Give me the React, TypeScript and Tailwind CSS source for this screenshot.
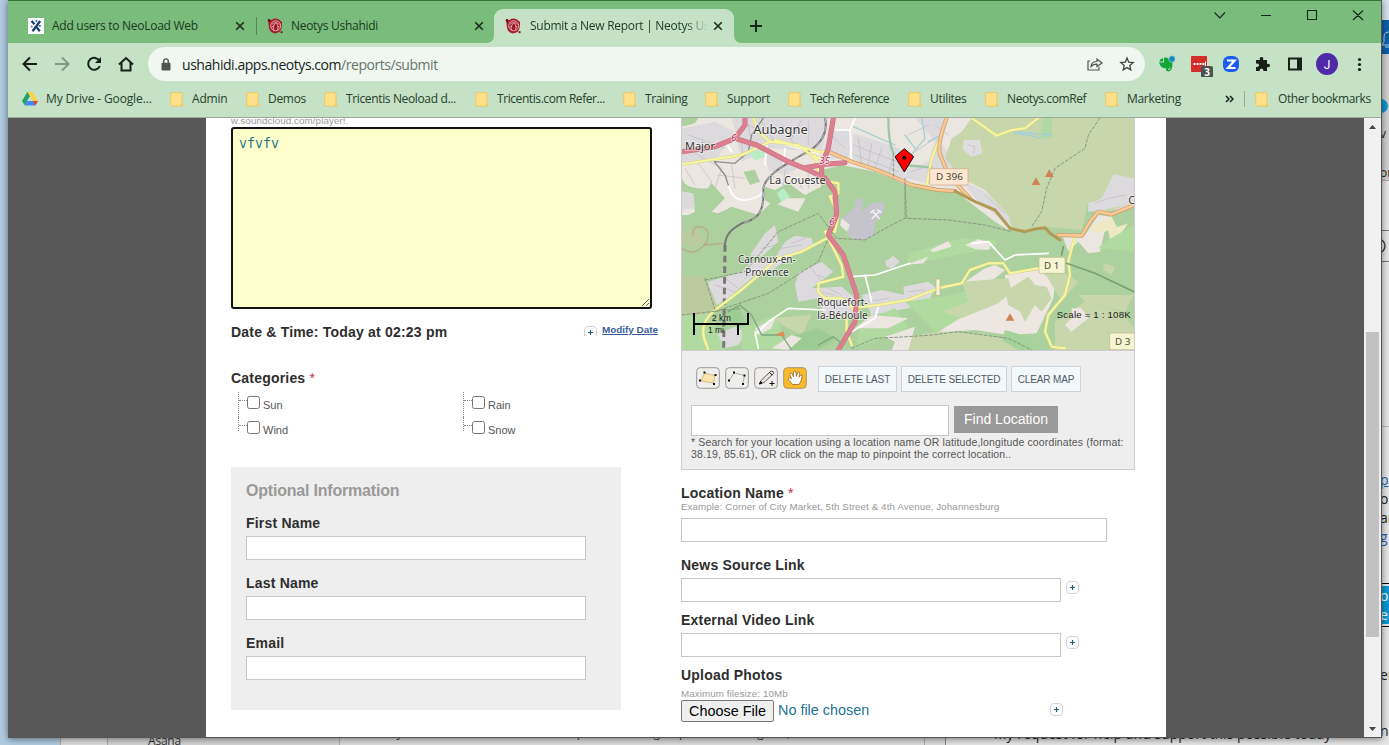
import React from "react";

const UI = "font-['Open_Sans','Noto_Sans',sans-serif]";

function Globe() {
  return (
    <svg width="17" height="17" viewBox="0 0 17 17" className="shrink-0" fill="none">
      <path d="M1 1.5 4.5 2Q8-.5 12 1.5L15 4 15 7Q15 11 12.5 14L8 15.5Q3 14.5 2 10L1.5 6Z" fill="#a51d2b" />
      <circle cx="8.7" cy="7.8" r="5" stroke="#f0c9c7" strokeWidth=".8" />
      <path d="M5 6.2Q9 3 12.500 6.500M4.600 9Q8 6 12.600 9M6.500 12Q5.500 7 9.200 4.400M10.600 12.300Q12 8 9.400 5.200" stroke="#f0c9c7" strokeWidth=".7" />
      <circle cx="8.800" cy="8" r="1.500" fill="#8c1420" />
      <circle cx="14.600" cy="14.200" r="1.100" fill="#8c1420" />
      <circle cx="2" cy="2.400" r="1.300" fill="#6f1019" />
    </svg>
  );
}

function Close() {
  return (
    <svg width="10" height="10" viewBox="0 0 10 10" className="shrink-0">
      <path d="M1.2 1.2 8.8 8.8M8.8 1.2 1.2 8.8" stroke="#1c2b1d" strokeWidth="1.6" />
    </svg>
  );
}

function Folder() {
  return (
    <svg width="14" height="15" viewBox="0 0 14 15" className="shrink-0">
      <path d="M1.5.7H11Q12 .7 12 1.7V12L13 14H1.5Q.8 14 .8 13V1.5Q.8.7 1.5.7Z" fill="#ffe08a" stroke="#efc456" strokeWidth=".9" />
      <path d="M11.5 9.5 13 13.5 10.3 14Z" fill="#f3c95d" />
    </svg>
  );
}

function Plus() {
  return (
    <svg width="13" height="13" viewBox="0 0 13 13" className="shrink-0">
      <rect x=".5" y=".5" width="12" height="12" rx="3.5" fill="#fff" stroke="#d2d2d8" />
      <path d="M6.5 4V9M4 6.5H9" stroke="#1c5b78" strokeWidth="1.2" />
    </svg>
  );
}

const bookmarks = [
  { label: "Admin", cls: "w-[76px]", text: "tracking-[-0.2px]" },
  { label: "Demos", cls: "w-[78px]", text: "tracking-[-0.3px]" },
  { label: "Tricentis Neoload d...", cls: "w-[151px]", text: "tracking-[-0.36px]" },
  { label: "Tricentis.com Refer...", cls: "w-[148px]", text: "tracking-[-0.42px]" },
  { label: "Training", cls: "w-[82px]", text: "tracking-[-0.4px]" },
  { label: "Support", cls: "w-[83px]", text: "tracking-[-0.3px]" },
  { label: "Tech Reference", cls: "w-[120px]", text: "tracking-[-0.5px]" },
  { label: "Utilites", cls: "w-[77px]", text: "tracking-[-0.3px]" },
  { label: "Neotys.comRef", cls: "w-[120px]", text: "tracking-[-0.4px]" },
  { label: "Marketing", cls: "w-[90px]", text: "tracking-[-0.3px]" },
];

function TabStrip() {
  return (
    <div className={`flex h-[43px] shrink-0 border-t border-[#35713a] bg-[#79bc7c] text-[12px] text-[#1c3a20] ${UI}`}>
      <div className="mt-2 flex h-[34px] w-[248px] items-center pl-5 pr-[11px]">
        <svg width="16" height="16" viewBox="0 0 16 16" className="shrink-0">
          <rect width="16" height="16" fill="#fff" />
          <path d="M3.500 3 6.500 6.200M12.200 3 4.500 13.200M8.800 9.500 11.800 13.200" stroke="#173f78" strokeWidth="2.300" />
          <path d="M7.800 3.800 9 2.400M2.800 8.500H4.500M10.800 7.800H12.800" stroke="#2c66a8" strokeWidth="1.700" />
        </svg>
        <span className="ml-2 flex-1 whitespace-nowrap tracking-[-0.27px]">Add users to NeoLoad Web</span>
        <Close />
      </div>
      <div className="mt-4 h-[18px] w-px bg-[#4f8a54]" />
      <div className="mt-2 flex h-[34px] w-[229px] items-center pl-[10px] pr-[2px]">
        <Globe />
        <span className="ml-[7px] flex-1 whitespace-nowrap tracking-[-0.29px]">Neotys Ushahidi</span>
        <Close />
      </div>
      <div className="mt-2 flex">
        <svg width="8" height="34" viewBox="0 0 8 34"><path d="M8 26Q8 34 0 34H8Z" fill="#c5e1c6" /></svg>
        <div className="flex h-[34px] w-[240px] items-center rounded-t-[9px] bg-[#c5e1c6] pl-[11px] pr-[11px]">
          <Globe />
          <span className="ml-[8px] w-[178px] shrink-0 overflow-hidden whitespace-nowrap tracking-[-0.28px] [mask-image:linear-gradient(to_right,black_155px,transparent_178px)]">
            Submit a New Report | Neotys Ushahidi
          </span>
          <span className="ml-[5px] flex"><Close /></span>
        </div>
        <svg width="8" height="34" viewBox="0 0 8 34"><path d="M0 26Q0 34 8 34H0Z" fill="#c5e1c6" /></svg>
      </div>
      <svg width="14" height="14" viewBox="0 0 14 14" className="ml-[7px] mt-[18px]">
        <path d="M7 1V13M1 7H13" stroke="#14261a" strokeWidth="2" />
      </svg>
      <svg width="160" height="24" viewBox="0 0 160 24" className="ml-auto mr-[9px] mt-[2px]" fill="none" stroke="#14261a" strokeWidth="1.1">
        <path d="M2.5 9.5 7.8 15 13 9.5M49 12.5H59M95.5 7.5H104.5V16.5H95.5ZM141 7.5 151 17M151 7.5 141 17" />
      </svg>
    </div>
  );
}

function Toolbar() {
  return (
    <div className={`flex h-[75px] shrink-0 flex-col border-b border-[#9aab9b] bg-[#c5e1c6] ${UI}`}>
      <div className="flex h-[42px] items-center">
        <svg width="130" height="24" viewBox="8 52 130 24" className="ml-0 shrink-0" fill="none" stroke="#17211a" strokeWidth="2">
          <path d="M37 64H24M30 57.5 23.5 64 30 70.5" />
          <path d="M55 64H68M62 57.5 68.500 64 62 70.500" stroke="#7f9a83" />
          <path d="M99.500 61A6 6 0 1 0 99.800 66" />
          <path d="M101 57V63H95Z" fill="#17211a" stroke="none" />
          <path d="M119 64.500 126 58 133 64.500M121.500 63V70.500H130.500V63" />
        </svg>
        <div className="ml-[10px] flex h-[34px] w-[997px] items-center rounded-full bg-[#eff7f0] pl-[13px] pr-[10px]">
          <svg width="10" height="13" viewBox="0 0 10 13"><rect x=".5" y="4.700" width="9" height="7.800" rx="1" fill="#4d5650" /><path d="M2.700 5V3.200A2.300 2.300 0 0 1 7.300 3.200V5" stroke="#4d5650" strokeWidth="1.400" fill="none" /></svg>
          <span className="ml-[11px] whitespace-nowrap text-[14px] tracking-[-0.46px] text-[#1b241d]">
            ushahidi.apps.neotys.com<span className="text-[#68756b]">/reports/submit</span>
          </span>
          <svg width="16" height="16" viewBox="0 0 16 16" className="ml-auto" fill="none" stroke="#4d5650" strokeWidth="1.200">
            <path d="M3 5H1V14H12V11M4 10.500Q4.500 5.500 10 5.500V3L15 7 10 10.500V8.200Q6.500 8 4 10.500Z" />
          </svg>
          <svg width="16" height="16" viewBox="0 0 16 16" className="ml-4" fill="none" stroke="#3f4a42" strokeWidth="1.300">
            <path d="M8 2 9.700 6.100 14.200 6.500 10.800 9.500 11.800 13.900 8 11.600 4.200 13.900 5.200 9.500 1.800 6.500 6.300 6.100Z" />
          </svg>
        </div>
        <svg width="220" height="26" viewBox="1153 51 220 26" className="ml-2 shrink-0">
          <path d="M1163 58V61.500H1159.300Q1160 58.500 1163 58Z" fill="#12a537" />
          <path d="M1164 57.500Q1168 57 1169 59Q1172.500 59 1172.500 63Q1172.500 71 1168.500 71.500Q1165 71 1166 68Q1161 69 1159 62.500H1164Z" fill="#12a537" />
          <path d="M1168 69.500Q1170 70 1170 67.500" stroke="#c5e1c6" fill="none" />
          <circle cx="1172" cy="59" r="3.200" fill="#1188c4" stroke="#c5e1c6" strokeWidth=".6" />
          <rect x="1191" y="56" width="16" height="16" rx="1" fill="#d32d27" />
          <path d="M1193.500 64H1204.500" stroke="#fff" strokeWidth="2" strokeDasharray="2 1" />
          <path d="M1205.500 61.500V66" stroke="#fff" />
          <rect x="1201" y="66" width="12" height="12" rx="2" fill="#4c524e" />
          <text x="1207" y="76" textAnchor="middle" fontFamily="Open Sans" fontSize="10" fontWeight="700" fill="#fff">3</text>
          <rect x="1223" y="56" width="16" height="16" rx="6" fill="#1c5cf0" />
          <path d="M1227 60.500H1234.500L1228 68H1235.500" fill="none" stroke="#fff" strokeWidth="2.200" />
          <path d="M1256 60H1260Q1259 57 1261.500 57T1263 60H1267V64Q1270 63 1270 65.500T1267 67V71H1263.500Q1263.500 68.500 1261.500 68.500T1259.500 71H1256V67Q1259 67 1259 65T1256 63.500Z" fill="#17211a" />
          <path d="M1289 58.500H1301V69.500H1289Z" fill="none" stroke="#17211a" strokeWidth="2" />
          <path d="M1297 58H1302V70H1297Z" fill="#17211a" />
          <circle cx="1327" cy="64" r="11" fill="#4f2aa8" />
          <text x="1327" y="68.500" textAnchor="middle" fontFamily="Roboto" fontSize="12" fill="#fff">J</text>
          <g fill="#17211a"><circle cx="1359.500" cy="59.500" r="1.600" /><circle cx="1359.500" cy="64.500" r="1.600" /><circle cx="1359.500" cy="69.500" r="1.600" /></g>
        </svg>
      </div>
      <div className="flex h-7 items-center whitespace-nowrap pl-[14px] text-[12px] text-[#25402a]">
        <svg width="16" height="14" viewBox="0 0 16 14" className="shrink-0">
          <path d="M5.300 0H10.500L5.200 9 2.800 13.200 0 9Z" fill="#1fa463" />
          <path d="M5.300 0H10.500L16 9H11Z" fill="#ffcf48" />
          <path d="M5 9H16L13.300 13.500H2.600Z" fill="#4285f4" />
          <path d="M11 9H16L13.400 13.500Z" fill="#ea4335" />
          <path d="M8 4.500 5.300 9H10.700Z" fill="#c5e1c6" />
        </svg>
        <span className="ml-2 w-[124px] shrink-0 tracking-[-0.13px]">My Drive - Google...</span>
        {bookmarks.map((b) => (
          <div key={b.label} className={`flex shrink-0 items-center ${b.cls}`}>
            <Folder />
            <span className={`ml-[8px] ${b.text}`}>{b.label}</span>
          </div>
        ))}
        <svg width="9" height="8" viewBox="0 0 9 8" className="ml-[30px] shrink-0" fill="none" stroke="#17211a" strokeWidth="1.500"><path d="M1 1 4 4 1 7M5 1 8 4 5 7" /></svg>
        <div className="ml-[10px] h-4 w-px bg-[#8fae93]" />
        <div className="ml-[10px] flex items-center"><Folder /><span className="ml-[9px] tracking-[-0.38px]">Other bookmarks</span></div>
      </div>
    </div>
  );
}

const yellowRoads =
  "M21 148 200 120 285 80 370 90 420 130 450 130M300 75 430 110 465 110M285 80 250 50 235 9M435 190 420 120M460 200 490 205 490 235 465 245M465 365 380 410 310 430 205 520 120 585Q65 630 95 690L100 705M465 245 490 300 480 350 450 350 500 450 505 485 430 505V530L450 550H500L550 590M530 580 610 570 700 555 790 520 860 505 885 465 940 445 985 445 1005 475 1090 460 1150 470M890 9 965 62 1010 45 1050 40 1090 9M1200 365 1190 400 1180 440 1185 480 1170 540 1120 600 1110 650 1130 695 1170 700M755 210 770 130 790 80M515 600 515 650 530 690";
const orangeRoads =
  "M460 110 530 140 620 170 710 210 790 225 840 228M815 9Q780 100 800 130L820 180 885 250M1150 360 1220 362 1245 320 1270 290 1310 298 1377 270";
const motorways =
  "M21 110 120 95 180 70 210 30 210 9M180 70 245 90 340 140 400 165 450 190 480 230 485 300 460 360 505 420 545 540 540 620 490 705M475 9 460 100 440 150 440 185M390 158 450 148 510 143";

function MapView() {
  const road = { fill: "none", strokeLinecap: "round" as const, strokeLinejoin: "round" as const };
  return (
    <svg width="452" height="232" viewBox="21 9 1356 696" preserveAspectRatio="none" className="block" fontFamily="Noto Sans">
      <rect x="21" y="9" width="1356" height="696" fill="#add19e" />
      <path d="M21 9H900L1010 325 1000 345 960 320 840 228 690 205 600 170 500 150 440 165 438 215 400 235 370 290 290 262 250 300 170 275 120 300 21 300Z" fill="#ece6e1" />
      <path d="M21 190Q30 225 100 220L110 205 150 250 110 290 150 300 21 310 60 290 50 235 21 230ZM21 9H70L60 25 21 35Z" fill="#add19e" />
      <path d="M270 215 300 225 340 205 390 240 425 225 400 250 330 250 300 275 270 255ZM205 170 240 165 255 200 225 210Z" fill="#add19e" />
      <g fill="#dcdadd">
        <path d="M21 40 120 20 180 50 120 140 21 150ZM170 9H460L440 110 290 100 200 140ZM460 40 530 50 520 130 440 135ZM535 55 660 95 690 110V210L600 165 530 130ZM21 230 55 235 60 280 21 285ZM270 110 330 125 370 160 330 180 280 165Z" />
        <path d="M720 9H820L800 90 840 130 870 215 790 210 690 190 700 160 760 140 780 80ZM870 75 915 80 920 120 880 125 865 105ZM860 195 920 225 1000 280 1012 325 990 325 900 250Z" />
        <path d="M270 355 300 330 310 380 260 425 225 420ZM330 380 360 362 410 370 415 395 340 430 300 460 240 480 165 545 110 580 100 500 200 470 230 440 300 430ZM370 475 440 440 475 470 410 520 500 515 540 550 550 600 450 610 430 550 370 560 360 510ZM560 540 620 525 690 540 750 530 770 550 700 580 590 600ZM120 660 180 635 215 650 190 690 130 705ZM630 440 655 422 675 440 650 460 635 455Z" />
        <path d="M1310 180 1377 195V275L1290 290 1240 288V260L1280 250ZM685 515 760 500 785 520 765 545 690 560Z" />
      </g>
      <path d="M500 312 540 275 542 255 565 250 560 290 590 265 625 260 628 290 600 325 595 365 550 377 515 360 520 335Z" fill="#c5c3cb" />
      <path d="M890 9H1377V260L1300 290 1240 260 1220 345 1100 335 1060 345 1010 340 1000 300 930 225 860 190 810 130 830 70 860 50Z" fill="#c8d7ab" />
      <path d="M1377 190 1315 178 1300 210 1280 250 1242 265 1240 290 1280 285 1377 265Z" fill="#dcdadd" />
      <path d="M866 75 915 75 922 115 890 125 864 105Z" fill="#dfdddd" />
      <path d="M1105 9H1130V70L1095 65Z" fill="#afd9a5" />
      <path d="M1160 355 1230 360 1270 300 1310 305 1325 335 1290 345 1275 410 1240 415 1210 380 1180 410Z" fill="#ece6e1" />
      <path d="M1245 335 1310 305 1325 335 1290 350 1260 355ZM1300 345 1360 325 1330 365 1320 390 1307 388Z" fill="#eee9c4" />
      <g fill="#b0daa0">
        <path d="M1290 380 1377 330V410L1270 400ZM700 415 860 370 960 375 960 400 870 415 700 450ZM690 560 830 540 970 500 1010 520 960 570 780 650 730 600ZM560 620 660 580 700 640 540 700ZM21 600 100 590 150 705H21ZM200 640 300 600 340 700 200 705Z" />
      </g>
      <path d="M790 650 870 600 950 570 990 515 990 480 1090 465 1140 500 1135 550 1085 655 1000 660 900 645 820 650Z" fill="#eee7e1" />
      <path d="M870 500 930 460 960 450 990 465 960 490 890 530Z" fill="#ece6e1" />
      <g fill="#c8d7ab">
        <path d="M990 530 1060 485 1080 510 1115 515 1130 550 1100 590 1080 570 1050 620 1035 590 1000 570ZM860 500 1000 490 1010 530 970 565 860 610 800 590 880 560ZM690 665 790 650 920 655 1060 690 1100 705H690ZM1140 620 1230 560 1340 590 1377 640V705H1140ZM1110 475 1170 475 1210 500 1160 560ZM1210 540 1377 540 1350 590 1230 560ZM1285 445 1320 455 1310 480 1285 465ZM290 610 410 600 380 660 340 640Z" />
        <path d="M21 480 90 485 130 580 90 600 21 600ZM21 350 70 340 90 375 60 400 21 385Z" fill="#bccb9d" />
      </g>
      <path d="M990 645 1060 665 1100 705H1030L980 675Z" fill="#a4d29a" />
      <path d="M330 670 430 640 480 670 430 705H330ZM150 590 190 570 210 620 170 625Z" fill="#9ccb93" />
      <g fill="#ece6e1">
        <path d="M765 405 820 378 830 395 775 412ZM870 390 910 373 950 385 940 405 900 402ZM690 450 760 425 745 445ZM1190 580 1220 580 1240 610 1190 650 1170 630 1190 610ZM630 665 720 635 700 705H650L660 680ZM540 640 590 600 700 610 640 640ZM240 640 300 610 290 640 250 660ZM290 700 350 660 380 670 340 705ZM500 310 525 330 515 350 495 330Z" />
      </g>
      <path d="M305 235 325 220 345 245 320 260ZM220 115 265 105 275 125 240 135Z" fill="#b9edc5" />
      <g {...road} stroke="#bdbac2" strokeWidth="2">
        <path d="M40 60 150 100M60 115 140 160 120 220M70 145 110 200 95 230M220 30 230 90M260 20 300 80M320 30 360 90M380 15 350 70M470 60 510 100M550 70 560 145M590 85 580 150M620 100 600 160M655 120 640 180M700 60 760 30M705 120 780 70M710 170 770 150M120 510 180 530M150 490 190 520M260 400 300 390M350 385 390 370M410 460 440 500M430 530 480 540M1260 265 1300 250 1350 240M880 90 900 95 895 115M930 240 990 295M200 80 205 130M230 165 250 200M330 165 325 210M370 190 380 220M400 175 400 220M535 90 690 150M540 120 670 170M30 160 60 210M130 180 210 190M170 150 180 220M290 180 350 230M200 20 260 50M400 20 400 90M430 480 470 500M460 520 500 540M210 490 240 470M320 400 380 390M580 560 640 550M700 530 750 525M820 60 780 30" />
        <path d="M21 400Q60 430 95 380 110 340 75 335 50 335 55 360M90 390 150 385" stroke="#b8aa87" strokeWidth="4" />
      </g>
      <g {...road} stroke="#a5cfd2" strokeWidth="4">
        <path d="M700 130 750 70 740 9M720 100 690 60M760 80 800 60M535 35 660 90M1020 50 1130 60M1020 55 1060 60 1100 70" />
      </g>
      <path {...road} d="M640 9Q640 80 655 115M690 150 770 158" stroke="#9dc8a8" strokeWidth="7" />
      <g {...road} stroke="#fff">
        <path d="M160 205Q170 260 215 255 270 245 265 215M275 90 270 150M300 80 430 115M480 45 525 45 540 9M525 45 530 145M530 485 600 480 705 445M570 480 590 560M530 650 600 610 610 575M240 660 280 620 340 580 450 585M330 100 325 145M890 385 940 380 990 435 1020 420 1120 415M250 700 240 650M150 80 170 110" strokeWidth="5" />
      </g>
      <g {...road}>
        <path d="M118 140 180 145 220 110 230 60 265 9M118 140 150 180 160 210" stroke="#8e8e88" strokeWidth="4" />
        <path d="M450 9Q465 80 380 120C330 150 270 180 265 220 270 300 240 315 200 325 155 350 150 370 149 400" stroke="#777" strokeWidth="6" />
        <path d="M450 9Q465 80 380 120C330 150 270 180 265 220 270 300 240 315 200 325 155 350 150 370" stroke="#ddd" strokeWidth="2" strokeDasharray="14 12" />
        <path d="M150 390 146 705" stroke="#777" strokeWidth="9" strokeDasharray="20 12" strokeLinecap="butt" />
        <path d={yellowRoads} stroke="#d6d784" strokeWidth="9" />
        <path d={yellowRoads} stroke="#f8f6a0" strokeWidth="6" />
        <path d={orangeRoads} stroke="#c99a64" strokeWidth="12" />
        <path d={orangeRoads} stroke="#f9c895" strokeWidth="8" />
        <path d="M840 228 900 260 960 285 1005 340 1050 350 1080 342 1110 338 1125 355 1155 375" stroke="#b09a55" strokeWidth="9" />
        <path d={motorways} stroke="#c36d7e" strokeWidth="15" />
        <path d={motorways} stroke="#de7f90" strokeWidth="12" />
        <g stroke="#879781" strokeWidth="3" strokeDasharray="9 6"><path d="M90 495 210 470 310 350 430 295 485 370 570 375 640 335 690 310V190M655 115V190M690 210 695 310 820 315 930 330 1010 350M120 590 280 535 430 440 460 370M21 600 200 580M1275 9 1240 60 1230 100 1140 160 1115 220 1100 290 1070 335M530 700 600 670 700 665 770 660 850 650 1000 670 1070 705M90 490 120 585" /></g>
        <path d="M160 590 195 570 230 600 260 660 320 660 350 705M430 690 475 665 500 685" stroke="#7fa781" strokeWidth="4" />
        <path d="M1160 420 1165 395M1175 445 1260 475 1377 530" stroke="#7b9f75" strokeWidth="5" />
      </g>
      <g fill="#d08155"><path d="M1070 210 1083 187 1096 210ZM1110 186 1123 163 1136 186ZM992 617 1005 595 1018 617Z" /><path d="M300 660 325 648 330 665Z" fill="#e08b55" /></g>
      <path d="M590 312 614 288M592 288 614 312M586 294 598 284M606 284 620 292" stroke="#f5f5f8" strokeWidth="4" />
      <g stroke="#beb389" strokeWidth="2">
        <rect x="764" y="161" width="115" height="49" rx="4" fill="#fce6d2" stroke="#caa681" />
        <rect x="1092" y="427" width="78" height="48" rx="4" fill="#f5f5d2" />
        <rect x="1304" y="654" width="80" height="50" rx="4" fill="#f5f5d2" />
        <rect x="783" y="492" width="12" height="49" fill="#f5f5d2" />
      </g>
      <g fill="#4c4934" fontSize="29">
        <text x="783" y="196" textLength="81" lengthAdjust="spacingAndGlyphs">D 396</text>
        <text x="1107" y="461" textLength="46" lengthAdjust="spacingAndGlyphs">D 1</text>
        <text x="1320" y="691" textLength="46" lengthAdjust="spacingAndGlyphs">D 3</text>
      </g>
      <g fill="#a82948" fontSize="29" fontStyle="italic" stroke="#fff" strokeWidth="4" strokeOpacity=".85" paintOrder="stroke">
        <text x="168" y="78">6</text><text x="433" y="147">35</text><text x="462" y="331">6</text>
      </g>
      <g fill="#333" stroke="#fff" strokeWidth="5" strokeOpacity=".65" paintOrder="stroke">
        <text x="235" y="56" fontSize="39" textLength="163" lengthAdjust="spacingAndGlyphs">Aubagne</text>
        <text x="30" y="104" fontSize="34" textLength="90" lengthAdjust="spacingAndGlyphs">Major</text>
        <text x="283" y="207" fontSize="33" textLength="169" lengthAdjust="spacingAndGlyphs">La Coueste</text>
        <text x="189" y="444" fontSize="30" textLength="173" lengthAdjust="spacingAndGlyphs">Carnoux-en-</text>
        <text x="211" y="482" fontSize="30" textLength="130" lengthAdjust="spacingAndGlyphs">Provence</text>
        <text x="427" y="574" fontSize="30" textLength="151" lengthAdjust="spacingAndGlyphs">Roquefort-</text>
        <text x="427" y="611" fontSize="30" textLength="151" lengthAdjust="spacingAndGlyphs">la-Bédoule</text>
        <text x="1360" y="266" fontSize="32">C</text>
      </g>
      <path d="M688 101 716 125 688 171 660 125Z" fill="#f00" stroke="#111" strokeWidth="3" />
      <circle cx="688" cy="128" r="6" fill="#111" />
      <path d="M57 594V660M55 627H221M219 594V629M189 627V660" fill="none" stroke="#000" strokeWidth="6" />
      <g fontFamily="Liberation Sans" fill="#222">
        <text x="110" y="617" fontSize="27" textLength="58" lengthAdjust="spacingAndGlyphs">2 km</text>
        <text x="99" y="654" fontSize="27" textLength="48" lengthAdjust="spacingAndGlyphs">1 mi</text>
        <text x="1145" y="609" fontSize="29" textLength="222">Scale = 1 : 108K</text>
      </g>
    </svg>
  );
}

function Tool({ active, children }: { active?: boolean; children: React.ReactNode }) {
  return (
    <svg width="24" height="22" viewBox="0 0 24 22" className="shrink-0">
      <rect x=".7" y=".7" width="22.600" height="20.600" rx="3.500" fill={active ? "#fbb829" : "#efeeea"} stroke={active ? "#a59770" : "#999"} />
      {children}
    </svg>
  );
}

const field = "block border border-[#c6c6c6] bg-white outline-none";
const label = "block whitespace-nowrap text-[14px] font-bold leading-5 tracking-[0.2px] text-[#2e2e2e]";
const hint = "block whitespace-nowrap text-[9.75px] leading-3 tracking-[0.1px] text-[#999]";

function Category({ name, last }: { name: string; last?: boolean }) {
  return (
    <label className="flex h-[25px] text-[11px] text-[#555]">
      <span className={`w-px border-l border-dotted border-[#888] ${last ? "h-[14px]" : "h-[25px]"}`} />
      <span className="mt-[8px] h-px w-2 border-t border-dotted border-[#888]" />
      <input type="checkbox" className="m-0 mt-[4px] h-[13px] w-[13px] shrink-0 appearance-none rounded-[2.500px] border border-[#767676] bg-white" />
      <span className="ml-[3px] mt-[5px] leading-4">{name}</span>
    </label>
  );
}

function LeftColumn() {
  return (
    <div className="w-[450px] shrink-0">
      <div className="flex h-[9px] items-end">
        <span className={hint}>w.soundcloud.com/player!.</span>
      </div>
      <textarea
        defaultValue="vfvfv"
        spellCheck={false}
        className="block h-[182px] w-[421px] resize rounded-[3px] border-2 border-[#111] bg-[#ffc] px-1.5 py-[7px] font-['DejaVu_Sans_Mono',monospace] text-[13.300px] leading-4 text-[#1f7488] outline-none"
      />
      <div className="mt-[13px] flex h-5 w-[427px] items-center">
        <span className={label}>Date &amp; Time: Today at 02:23 pm</span>
        <span className="ml-auto flex items-center gap-[5px]">
          <span className="-mt-[2px] flex h-[10px] items-start overflow-hidden"><Plus /></span>
          <a className="-mt-[3px] whitespace-nowrap text-[9.900px] font-bold text-[#3c5d9c] underline">Modify Date</a>
        </span>
      </div>
      <div className="mt-[26px]">
        <span className={label}>Categories <span className="font-normal text-[#c4304b]">*</span></span>
      </div>
      <div className="ml-[7px] mt-1 grid h-[75px] grid-cols-[225px_200px] grid-rows-[25px_25px]">
        <Category name="Sun" />
        <Category name="Rain" />
        <Category name="Wind" last />
        <Category name="Snow" last />
      </div>
      <div className="h-[243px] w-[390px] bg-[#eee] px-[15px] pt-[14px]">
        <h4 className="text-[16px] font-bold leading-5 tracking-[-0.2px] text-[#999]">Optional Information</h4>
        {["First Name", "Last Name", "Email"].map((n, i) => (
          <div key={n} className={i === 0 ? "mt-3" : "mt-[13px]"}>
            <span className={label}>{n}</span>
            <input className={`${field} mt-[3px] h-6 w-[340px]`} />
          </div>
        ))}
      </div>
    </div>
  );
}

function RightColumn() {
  return (
    <div className="w-[460px] shrink-0">
      <div className="h-[352px] w-[454px] border border-t-0 border-[#ccc] bg-[#eee]">
        <MapView />
        <div className="flex h-[42px] items-end border-t border-[#ccc] pl-[14px]">
          <div className="mb-[3px] flex gap-[5px]">
            <Tool><path d="M8.500 6 19 8.500 17.500 16 5 14Z" fill="#fde3ac" stroke="#c8ad7b" strokeWidth=".8" /><path d="M7.500 4.500h2v2h-2ZM18.500 7h2v2h-2ZM17 16h2v2h-2ZM3 12.500h2v2H3Z" fill="#111" /></Tool>
            <Tool><path d="M4.500 13.500 9 6 19.500 8.500 18 16.500" fill="none" stroke="#a5a5a5" strokeWidth=".9" /><path d="M8 4.500h2v2H8ZM18.500 7.500h2v2h-2ZM17 16h2v2h-2ZM3 12.500h2v2H3Z" fill="#111" /></Tool>
            <Tool><path d="M17 4Q20 4 19.500 6.500L10 15.500 5.500 17 7.500 13Z" fill="#e9e7df" stroke="#444" strokeWidth=".9" /><path d="M5.500 17 6.500 14.500 8 16ZM15.500 5.500 18.200 8M18 14V19M15.500 16.500H20.500" stroke="#111" fill="#111" /></Tool>
            <Tool active><path d="M9.500 17.500 5 12Q5.500 9.500 8.500 12L6.800 7.500Q7.500 5 9.300 7L10.500 10 10.500 5Q12 3.300 13 5L13.300 9.500 14.800 5.300Q16.500 4.500 16.500 6.500L16 10.300 17.800 7.800Q19.800 7.500 19 9.800L18 14 16 17.500Z" fill="#fff" stroke="#8a6a28" strokeWidth=".8" /></Tool>
          </div>
          <div className="ml-[11px] flex gap-1 whitespace-nowrap text-[10px] tracking-[-0.13px] text-[#4e5a66]">
            <button className="h-[26px] w-[79px] border border-[#cbd2da] bg-[#f3f8fb] p-0">DELETE LAST</button>
            <button className="h-[26px] w-[106px] border border-[#cbd2da] bg-[#f3f8fb] p-0">DELETE SELECTED</button>
            <button className="h-[26px] w-[70px] border border-[#cbd2da] bg-[#f3f8fb] p-0">CLEAR MAP</button>
          </div>
        </div>
        <div className="mt-[13px] flex gap-[5px] pl-[9px]">
          <input className={`${field} h-[31px] w-[258px]`} />
          <button className="mt-px h-[27px] w-[104px] whitespace-nowrap bg-[#999] text-[14px] text-white">Find Location</button>
        </div>
        <p className="whitespace-nowrap pl-[9px] text-[10.500px] leading-3 tracking-[0.135px] text-[#555]">
          * Search for your location using a location name OR latitude,longitude coordinates (format:
          <br />
          38.19, 85.61), OR click on the map to pinpoint the correct location..
        </p>
      </div>
      <div className="mt-[13px]">
        <span className={label}>Location Name <span className="font-normal text-[#c4304b]">*</span></span>
        <span className={`${hint} -mt-[2px] h-3`}>Example: Corner of City Market, 5th Street &amp; 4th Avenue, Johannesburg</span>
        <input className={`${field} mt-[5px] h-6 w-[426px]`} />
      </div>
      <div className="mt-[13px]">
        <span className={label}>News Source Link</span>
        <div className="mt-[3px] flex gap-[5px]"><input className={`${field} h-6 w-[380px]`} /><span className="mt-[3px]"><Plus /></span></div>
      </div>
      <div className="mt-2">
        <span className={label}>External Video Link</span>
        <div className="mt-[3px] flex gap-[5px]"><input className={`${field} h-6 w-[380px]`} /><span className="mt-[3px]"><Plus /></span></div>
      </div>
      <div className="mt-2">
        <span className={label}>Upload Photos</span>
        <span className={`${hint} mt-[3px] h-3`}>Maximum filesize: 10Mb</span>
        <div className="flex w-[382px] items-center whitespace-nowrap text-[14.400px]">
          <button className="h-[22px] w-[93px] rounded-[2px] border border-[#777] bg-[#efefef] p-0 leading-5 text-black">Choose File</button>
          <span className="ml-1 text-[#1f7291]">No file chosen</span>
          <span className="-mt-1 ml-auto"><Plus /></span>
        </div>
      </div>
    </div>
  );
}

function Desktop() {
  return (
    <div className="absolute inset-0 bg-[#b0cbe0]">
      <div className={`absolute bottom-0 left-[60px] right-0 flex h-5 bg-[#dcdcdc] ${UI}`}>
        <div className="w-[48px] border-x border-[#aaa]" />
        <div className="w-[232px] border-r border-[#aaa] bg-[#d4d4d4] pl-10 pt-[8px] text-[12px] leading-4 tracking-[-0.2px] text-[#333]">Asana</div>
        <div className="w-[585px] overflow-hidden whitespace-nowrap border-r border-[#aaa] pl-[29px] text-[12px] leading-4 tracking-[-0.3px] text-[#333]">
          <span className="block">Hi-Ally I have shared details for next steps and awaiting response. Best Regards,</span>
        </div>
        <div className="w-[21px] border-r border-[#888]" />
        <div className="flex-1 whitespace-nowrap bg-[#e6e6e6] pl-[48px] text-[14px] leading-[18px] text-[#222]">My request for help and support this possible today</div>
      </div>
      <div className="absolute inset-y-0 right-0 w-[9px] overflow-hidden bg-[#e7e7e7] text-[14px] leading-4 text-[#222] font-['Open_Sans',sans-serif]">
        <div className="h-5 bg-[#d5e3ee]" />
        <div className="h-[34px] bg-[#0f5ea8]">
          <svg width="9" height="34" viewBox="0 0 9 34" fill="none" stroke="#bcd7ef"><path d="M9 12Q4 12 4 17V22L2 25H9M5 27H9" /></svg>
        </div>
        <div className="h-[127px] border-b border-[#aaa] bg-[#d3d0d1]">
          <svg width="9" height="72" viewBox="0 0 9 72"><circle cx="1" cy="52" r="7" fill="#1295cb" /></svg>
          <div className="text-[12px]">v</div>
          <div className="mt-[23px] text-[12px]">or</div>
        </div>
        <div className="mt-[49px] h-8 border-y border-[#777]"><svg width="9" height="30" viewBox="0 0 9 30"><circle cx="-2" cy="15" r="7" fill="none" stroke="#444" strokeWidth="1.500" /></svg></div>
        <div className="mt-[164px] border-t border-[#bbb]" />
        <div className="mt-[45px] text-[#2260ac] underline">p</div>
        <div className="mt-[3px]">o</div>
        <div className="mt-[3px]">ar</div>
        <div className="mt-[3px] text-[#2260ac] underline">g</div>
        <div className="mt-[38px] h-11 border-y border-black py-[2px]"><div className="h-[38px] bg-[#0a99d1] leading-[19px] text-white">o<br />er</div></div>
        <div className="mt-10">er</div>
        <div className="mt-10">ne</div>
      </div>
    </div>
  );
}

export default function App() {
  return (
    <div className="relative h-[745px] w-[1389px] overflow-hidden">
      <Desktop />
      <div className="absolute left-2 top-0 flex h-[738px] w-[1374px] flex-col border-b border-r border-[#555] shadow-[0_1px_7px_rgba(0,0,0,0.5)]">
        <TabStrip />
        <Toolbar />
        <div className="flex min-h-0 flex-1 overflow-hidden bg-[#585858] font-['Liberation_Sans',Arial,sans-serif]">
          <div className="ml-[198px] flex w-[960px] shrink-0 bg-white pl-[25px]">
            <LeftColumn />
            <RightColumn />
          </div>
          <div className="ml-auto flex w-[17px] flex-col items-center bg-[#f1f1f1]">
            <svg width="17" height="17" viewBox="0 0 17 17"><path d="M5 11 8.500 7 12 11Z" fill="#444" /></svg>
            <div className="mt-[197px] h-[305px] w-[13px] bg-[#c1c1c1]" />
            <svg width="17" height="17" viewBox="0 0 17 17" className="mt-auto"><path d="M5 7 8.500 11 12 7Z" fill="#444" /></svg>
          </div>
        </div>
      </div>
    </div>
  );
}
